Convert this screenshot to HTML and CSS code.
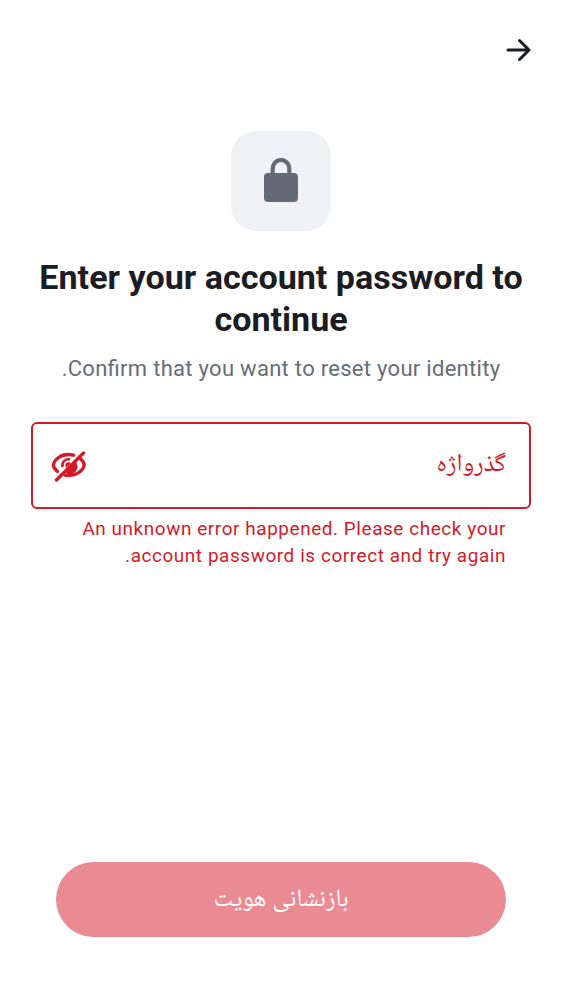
FILE: index.html
```html
<!DOCTYPE html>
<html lang="fa" dir="rtl">
<head>
<meta charset="utf-8">
<title>Reset identity</title>
<link rel="stylesheet" href="styles.css">
</head>
<body>
<main class="screen">
  <header class="topbar">
    <svg class="back" viewBox="0 0 25 24"><path d="M2 12H23M13.500 2.500L23 12L13.500 21.500"/></svg>
  </header>
  <section class="intro">
    <div class="tile">
      <svg class="lock" viewBox="0 0 34 44"><path class="shackle" d="M8.700 17V10.300a8.300 8.300 0 0 1 16.600 0V17"/><rect y="15" width="34" height="29" rx="4"/></svg>
    </div>
    <h1 class="title"><span>Enter your account password to</span> <span>continue</span></h1>
    <p class="subtitle">Confirm that you want to reset your identity.</p>
  </section>
  <div class="field">
    <span class="label">گذرواژه</span>
    <svg class="eye" viewBox="0 0 36 32">
      <path class="outline" d="M6.500 21.500C4.300 19.700 2.500 17.300 2.300 15C3.500 9 10 4.500 17.500 4.500C19.400 4.500 21 4.800 22.600 5.200M28.500 8C31 9.800 33 12.500 33.300 15C32 21 25.500 25.500 17.500 25.500C16.300 25.500 15.100 25.400 14 25.200"/>
      <path class="iris" d="M11.700 17A5.900 5.900 0 0 1 19 9.500"/>
      <path class="pupil" d="M24.300 11A7.200 7.200 0 0 1 13.500 22Z"/>
      <path class="pupil" d="M14.300 15A3.300 3.300 0 0 1 18 12.200L20 13L15 18Z"/>
      <path class="outline" d="M5.500 30L32.500 3"/>
    </svg>
  </div>
  <p class="error"><span>An unknown error happened. Please check your</span><span>account password is correct and try again.</span></p>
  <button class="reset">بازنشانی هویت</button>
</main>
</body>
</html>
```
FILE: styles.css
```css
* { box-sizing: border-box; }
body { margin: 0; background: #fff; font-family: Roboto, "Noto Naskh Arabic UI", "Noto Naskh Arabic", "Noto Sans Arabic", "Noto Sans", sans-serif; color: #1b1d22; }
.screen { height: 1000px; display: flex; flex-direction: column; padding: 0 31px 63px; }
.topbar { height: 100px; display: flex; align-items: center; }
.back { width: 25px; height: 24px; fill: none; stroke: #1b1d22; stroke-width: 3; stroke-linecap: round; stroke-linejoin: round; }
.intro { display: flex; flex-direction: column; align-items: center; padding-top: 31px; }
.tile { width: 100px; height: 100px; border-radius: 25px; background: #f0f1f5; display: grid; place-items: center; padding-bottom: 2px; }
.lock { width: 34px; height: 44px; fill: #646b76; }
.shackle { fill: none; stroke: #646b76; stroke-width: 4.200; }
.title { margin: 25px 0 0; font-size: 34.1px; line-height: 42px; font-weight: 700; text-align: center; }
.title span { display: block; white-space: nowrap; }
.subtitle { margin: 15px 0 0; font-size: 22px; line-height: 28px; letter-spacing: .29px; font-feature-settings: "liga" 1; color: #656d77; white-space: nowrap; }
.field { height: 87px; margin-top: 39px; border: 2px solid #d51928; border-radius: 6px; display: flex; align-items: center; justify-content: space-between; padding: 0 23px 0 18px; color: #d51928; }
.label { font-size: 25px; line-height: 40px; padding-top: 1px; }
.eye { width: 36px; height: 32px; }
.outline { fill: none; stroke: #d51928; stroke-width: 3.300; stroke-linecap: round; }
.iris { fill: none; stroke: #d51928; stroke-width: 2.500; }
.pupil { fill: #d51928; }
.error { margin: 7px 25px 0; color: #d51928; font-size: 18.900px; line-height: 26.500px; letter-spacing: .59px; }
.error span { display: block; white-space: nowrap; }
.reset { margin: auto 25px 0; padding: 3px 0 0; height: 75px; border: 0; border-radius: 38px; background: #ea8b94; color: #fff; font-family: inherit; font-size: 24.800px; line-height: 40px; }
```
